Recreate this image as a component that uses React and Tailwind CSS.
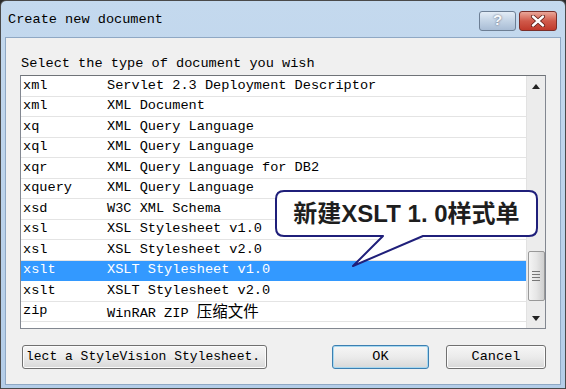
import React from "react";

const rows = [
  ["xml", "Servlet 2.3 Deployment Descriptor"],
  ["xml", "XML Document"],
  ["xq", "XML Query Language"],
  ["xql", "XML Query Language"],
  ["xqr", "XML Query Language for DB2"],
  ["xquery", "XML Query Language"],
  ["xsd", "W3C XML Schema"],
  ["xsl", "XSL Stylesheet v1.0"],
  ["xsl", "XSL Stylesheet v2.0"],
  ["xslt", "XSLT Stylesheet v1.0", true],
  ["xslt", "XSLT Stylesheet v2.0"],
  ["zip", "WinRAR ZIP ", "压缩文件"],
];

const mono = { fontFamily: '"Liberation Mono", "Noto Sans CJK SC", monospace' };

function Button({ children, className = "", focused }) {
  return (
    <div
      className={
        "h-[24px] flex items-center rounded-[3px] border bg-gradient-to-b from-[#f6f6f6] via-[#ebebeb] to-[#d8d8d8] text-[13.6px] text-black " +
        (focused
          ? "border-[#3c7fb1] shadow-[inset_0_0_0_1px_#a7d8f0] "
          : "border-[#707070] shadow-[inset_0_0_0_1px_#fcfcfc] ") +
        className
      }
    >
      {children}
    </div>
  );
}

export default function App() {
  return (
    <div className="w-[566px] h-[389px] bg-[#2c2c2c] relative" style={mono}>
      <div className="w-full h-full rounded-t-[6px] border border-[#4a4a4a] bg-gradient-to-b from-[#c4d9ee] to-[#b4cde8] flex flex-col px-[4px] pb-[3px]">
        {/* title bar */}
        <div className="h-[36px] flex items-center justify-between pl-[3px] pr-[4px]">
          <span className="text-[13.6px] text-black pt-[3px]">Create new document</span>
          <div className="flex gap-[3px] mt-[3px]">
            <div className="w-[37px] h-[20px] rounded-[3px] border border-[#6d7f95] bg-gradient-to-b from-[#e3ecf6] via-[#c3d3e5] to-[#a9bdd5] flex items-center justify-center">
              <span className="text-[15px] font-bold text-[#f6f9fc] [text-shadow:0_0_2px_#556]" style={{ fontFamily: '"Liberation Sans", sans-serif' }}>?</span>
            </div>
            <div className="w-[38px] h-[20px] rounded-[3px] border border-[#7a2f2a] bg-gradient-to-b from-[#e9a699] via-[#d0594a] to-[#c0392b] flex items-center justify-center">
              <svg width="16" height="12" viewBox="0 0 16 12">
                <path d="M3 1.5 L13 10.5 M13 1.5 L3 10.5" stroke="#5a1a14" strokeWidth="4" strokeLinecap="round" />
                <path d="M3 1.5 L13 10.5 M13 1.5 L3 10.5" stroke="#ffffff" strokeWidth="2.4" strokeLinecap="round" />
              </svg>
            </div>
          </div>
        </div>

        {/* client area */}
        <div className="flex-1 bg-[#f0f0f0] border border-[#8fa8c4] flex flex-col pl-[14px] pr-[14px]">
          <div className="h-[37px] shrink-0 flex items-end pb-[1px] pl-[1px] text-[13.6px] text-black">
            Select the type of document you wish
          </div>

          <div className="h-[254px] shrink-0 w-[526px] border border-[#828790] border-t-[#6f7378] bg-white flex">
            <div className="flex-1 flex flex-col">
              {rows.map(([ext, desc, sel], i) => {
                const selected = sel === true;
                const cjk = typeof sel === "string" ? sel : null;
                return (
                  <div
                    key={i}
                    className={
                      "h-[20.5px] shrink-0 flex items-center border-b text-[13.6px] " +
                      (selected
                        ? "bg-[#3399ff] border-[#3399ff] text-white"
                        : "border-[#e4e4e4] text-black")
                    }
                  >
                    <span className="w-[86px] pl-[2px] shrink-0 whitespace-pre">{ext}</span>
                    <span className="whitespace-pre">
                      {desc}
                      {cjk && <span className="text-[15.5px]" style={{ fontFamily: '"Noto Sans CJK SC", sans-serif' }}>{cjk}</span>}
                    </span>
                  </div>
                );
              })}
            </div>

            {/* scrollbar */}
            <div className="w-[19px] bg-[#ececec] border-l border-[#e2e2e2] flex flex-col items-center">
              <div className="h-[20px] w-full flex items-center justify-center">
                <svg width="8" height="5" viewBox="0 0 8 5"><path d="M0 5 L4 0 L8 5 Z" fill="#222" /></svg>
              </div>
              <div className="h-[155px]" />
              <div className="h-[50px] w-[17px] rounded-[2px] border border-[#999] bg-gradient-to-r from-[#f4f4f4] via-[#e6e6e6] to-[#cfcfcf] flex flex-col items-center justify-center gap-[2px]">
                <div className="w-[8px] h-px bg-[#777]" />
                <div className="w-[8px] h-px bg-[#777]" />
                <div className="w-[8px] h-px bg-[#777]" />
                <div className="w-[8px] h-px bg-[#777]" />
              </div>
              <div className="flex-1" />
              <div className="h-[20px] w-full flex items-center justify-center">
                <svg width="8" height="5" viewBox="0 0 8 5"><path d="M0 0 L4 5 L8 0 Z" fill="#222" /></svg>
              </div>
            </div>
          </div>

          <div className="flex-1 flex items-center justify-between pl-[2px] pt-[1px]">
            <Button className="w-[245px] pl-[3px] whitespace-pre text-[13px]">lect a StyleVision Stylesheet.</Button>
            <div className="flex gap-[17px]">
              <Button focused className="w-[97px] justify-center">OK</Button>
              <Button className="w-[100px] justify-center">Cancel</Button>
            </div>
          </div>
        </div>
      </div>

      {/* callout annotation */}
      <svg className="absolute left-[270px] top-[185px]" width="275" height="90" viewBox="0 0 275 90">
        <path
          d="M14 6 H259 Q267 6 267 14 V43 Q267 51 259 51 H153 L83 81 L113 51 H14 Q6 51 6 43 V14 Q6 6 14 6 Z"
          fill="#ffffff"
          stroke="#1f1f7a"
          strokeWidth="2"
          strokeLinejoin="round"
        />
      </svg>
      <div
        className="absolute left-[276px] top-[191px] w-[261px] h-[45px] flex items-center justify-center text-[24px] font-bold text-[#1e1e1e] whitespace-pre"
        style={{ fontFamily: '"Liberation Sans", "Noto Sans CJK SC", sans-serif' }}
      >
        新建XSLT 1. 0样式单
      </div>
    </div>
  );
}
